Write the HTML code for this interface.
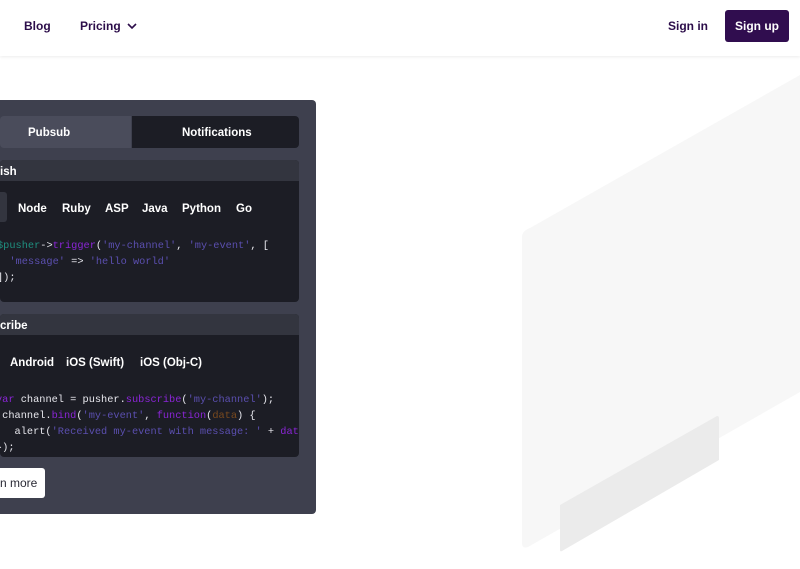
<!DOCTYPE html>
<html><head><style>
*{margin:0;padding:0;box-sizing:border-box}
body{width:800px;height:569px;overflow:hidden;background:#fff;font-family:"Liberation Sans",sans-serif;position:relative}
.nav{position:absolute;left:0;top:0;width:800px;height:56px;background:#fff;box-shadow:0 1px 3px rgba(0,0,0,.08);z-index:2}
.nav a{position:absolute;top:19px;font-size:12px;font-weight:bold;color:#2c0d4a}
.su{position:absolute;left:725px;top:10px;width:64px;height:32px;background:#300d4f;color:#fff;border-radius:3px;font-size:12px;font-weight:bold;text-align:center;line-height:32px}
.card{position:absolute;left:-20px;top:100px;width:336px;height:414px;background:#3e404e;border-radius:4px}
.abs{position:absolute}
.txt{color:#fff;font-size:11.5px;font-weight:bold;margin-top:2px}
.mono{font-family:"Liberation Mono",monospace;font-size:10.3px;color:#e8e8ee;white-space:pre;line-height:16px}
.p{color:#8a25d6}.s{color:#5b4fb0}.g{color:#1f8f7f}.o{color:#7a4a1e}
</style></head><body>
<div class="nav">
<a style="left:24px">Blog</a>
<a style="left:80px">Pricing <svg width="10" height="7" viewBox="0 0 10 7" style="margin-left:3px"><path d="M1 1l4 4 4-4" stroke="#2c0d4a" stroke-width="1.6" fill="none"/></svg></a>
<a style="left:668px">Sign in</a>
<div class="su">Sign up</div>
</div>
<svg class="abs" style="left:0;top:0" width="800" height="569">
<path d="M530 228 L800 75 L800 392 L528 547 Q522 549 522 543 L522 237 Q522 231 530 228Z" fill="#f7f7f7"/>
<path d="M560 505 L717 416 Q719 416 719 418 L719 460 L562 551 Q560 552 560 550Z" fill="#ebebeb"/>
</svg>
<div class="card"></div>
<div class="abs" style="left:0;top:116px;width:131px;height:32px;background:#4a4c5b;border-radius:4px 0 0 4px"></div>
<div class="abs txt" style="left:28px;top:125px">Pubsub</div>
<div class="abs" style="left:132px;top:116px;width:167px;height:32px;background:#1c1d25;border-radius:0 4px 4px 0"></div>
<div class="abs txt" style="left:182px;top:125px">Notifications</div>

<div class="abs" style="left:0;top:160px;width:299px;height:142px;background:#1c1d25;border-radius:4px;overflow:hidden">
<div style="height:21px;background:#33353f"></div></div>
<div class="abs txt" style="left:0;top:164px">ish</div>
<div class="abs" style="left:0;top:192px;width:7px;height:30px;background:#33353f;border-radius:0 3px 3px 0"></div>
<div class="abs txt" style="left:18px;top:201px">Node</div>
<div class="abs txt" style="left:62px;top:201px">Ruby</div>
<div class="abs txt" style="left:105px;top:201px">ASP</div>
<div class="abs txt" style="left:142px;top:201px">Java</div>
<div class="abs txt" style="left:182px;top:201px">Python</div>
<div class="abs txt" style="left:236px;top:201px">Go</div>
<div class="abs mono" style="left:-3px;top:238px"><span class="g">$pusher</span>-&gt;<span class="p">trigger</span>(<span class="s">'my-channel'</span>, <span class="s">'my-event'</span>, [
  <span class="s">'message'</span> =&gt; <span class="s">'hello world'</span>
]);</div>

<div class="abs" style="left:0;top:314px;width:299px;height:143px;background:#1c1d25;border-radius:4px;overflow:hidden">
<div style="height:21px;background:#33353f"></div></div>
<div class="abs txt" style="left:0;top:318px">cribe</div>
<div class="abs txt" style="left:10px;top:355px">Android</div>
<div class="abs txt" style="left:66px;top:355px">iOS (Swift)</div>
<div class="abs txt" style="left:140px;top:355px">iOS (Obj-C)</div>
<div class="abs mono" style="left:-4px;top:392px;width:303px;overflow:hidden"><span class="p">var</span> channel = pusher.<span class="p">subscribe</span>(<span class="s">'my-channel'</span>);
 channel.<span class="p">bind</span>(<span class="s">'my-event'</span>, <span class="p">function</span>(<span class="o">data</span>) {
   alert(<span class="s">'Received my-event with message: '</span> + <span class="p">data</span>
});</div>

<div class="abs" style="left:-10px;top:468px;width:55px;height:30px;background:#fff;border-radius:3px"></div>
<div class="abs" style="left:0;top:476px;font-size:12px;color:#2a2a35">n more</div>
</body></html>
